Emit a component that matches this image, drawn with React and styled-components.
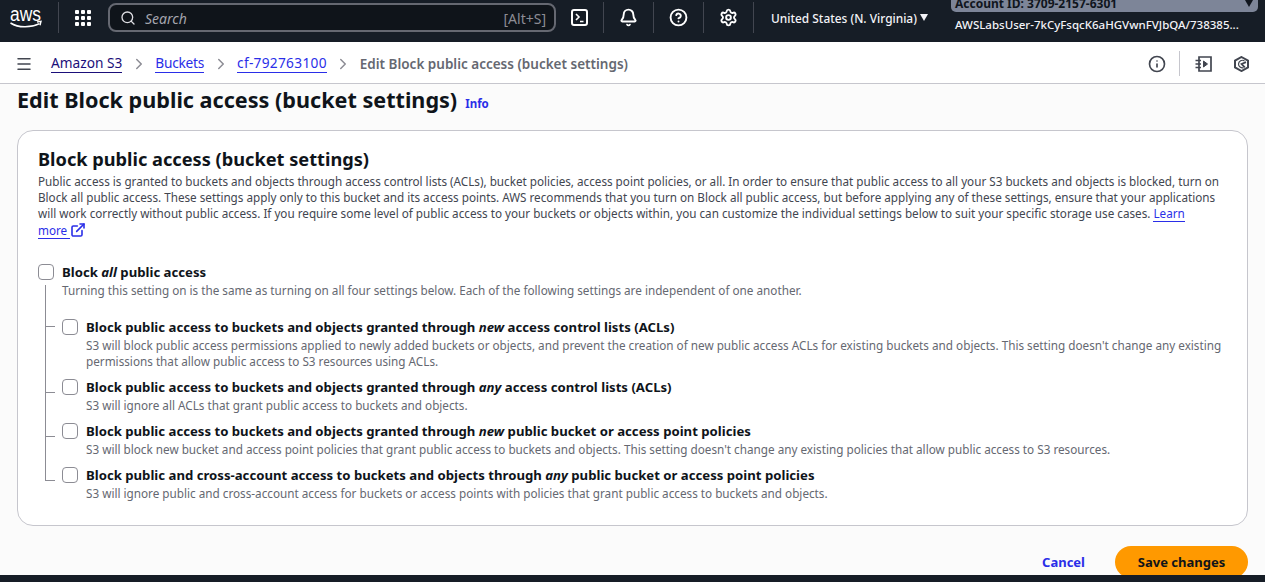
import styled, { createGlobalStyle } from "styled-components";
import { Search, Bell, CircleHelp, Settings, Info, Menu, ChevronRight, ExternalLink } from "lucide-react";

const GlobalStyle = createGlobalStyle`
  html, body { margin: 0; padding: 0; }
  body {
    font-family: "Noto Sans", "Open Sans", sans-serif;
    font-size: 14px;
    color: #0f141a;
    background: #fbfbfb;
  }
  * { box-sizing: border-box; }
`;

const Page = styled.div`
  width: 1265px;
  height: 582px;
  display: flex;
  flex-direction: column;
  overflow: hidden;
`;

const TopNav = styled.header`
  flex: 0 0 42px;
  background: #161d26;
  display: flex;
  align-items: flex-start;
  padding-top: 2px;
  color: #fff;
`;

const Logo = styled.div`
  width: 59px;
  height: 31px;
  padding-left: 10px;
  display: flex;
  align-items: center;
  border-right: 1px solid #424650;
`;

const GridButton = styled.div`
  width: 49px;
  height: 31px;
  padding: 8px 0 0 16px;
  display: grid;
  grid-template-columns: repeat(3, 4px);
  grid-auto-rows: 4px;
  gap: 2px;
  i { background: #fff; border-radius: 1px; }
`;

const SearchBox = styled.div`
  width: 448px;
  height: 29px;
  margin-top: 1px;
  border: 2px solid #656871;
  border-radius: 8px;
  background: #0f141a;
  display: flex;
  align-items: center;
  padding: 0 8px 0 10px;
  gap: 9px;
  color: #dedee3;
  em { flex: 1; color: #a4a4ad; font-size: 14px; margin-top: 1px; }
  span { color: #8c8c94; font-size: 14px; margin-top: 1px; }
`;

const NavIcon = styled.div`
  width: ${(p) => p.$w}px;
  height: 31px;
  display: flex;
  align-items: center;
  justify-content: center;
  border-right: 1px solid #424650;
  color: #fff;
`;

const Region = styled.div`
  width: 197px;
  height: 31px;
  padding-left: 17px;
  font-size: 11.9px;
  font-weight: 500;
  display: flex;
  align-items: center;
  color: #f3f3f7;
  white-space: pre;
`;

const Caret = styled.i`
  width: 0;
  height: 0;
  border-left: 4.5px solid transparent;
  border-right: 4.5px solid transparent;
  border-top: 7px solid ${(p) => p.$color || "#f3f3f7"};
`;

const Account = styled.div`
  width: 307px;
  margin-top: -2px;
  font-size: 12px;
  font-weight: 500;
  display: flex;
  flex-direction: column;
  white-space: nowrap;
`;

const AccountId = styled.div`
  height: 12px;
  background: #7d8598;
  color: #10151d;
  border-radius: 0 0 5px 5px;
  font-weight: 700;
  line-height: 8px;
  padding: 0 5px 0 4px;
  display: flex;
  justify-content: space-between;
  align-items: flex-start;
  overflow: hidden;
`;

const UserName = styled.div`
  margin-top: 5px;
  padding-left: 4px;
  font-size: 11.5px;
  color: #f3f3f7;
`;

const Breadcrumbs = styled.nav`
  flex: 0 0 42px;
  background: #fff;
  border-bottom: 1px solid #c6c6cd;
  display: flex;
  align-items: center;
  padding: 2px 9px 0 15px;
`;

const MenuButton = styled.div`
  width: 36px;
  display: flex;
  color: #424650;
`;

const Crumb = styled.a`
  font-size: 13.7px;
  line-height: 18px;
  letter-spacing: ${(p) => p.$track || 0}px;
  color: ${(p) => (p.$dark ? "#1b0f7a" : "#2a2ee8")};
  border-bottom: 1px solid currentColor;
  white-space: nowrap;
`;

const Separator = styled.span`
  width: 33px;
  display: flex;
  justify-content: center;
  color: #8c8c94;
`;

const Current = styled.span`
  font-size: 13.5px;
  font-weight: 600;
  color: #656871;
  white-space: nowrap;
`;

const ToolIcons = styled.div`
  margin-left: auto;
  display: flex;
  align-items: center;
  color: #424650;
`;

const ToolIcon = styled.div`
  width: ${(p) => p.$w}px;
  height: 25px;
  display: flex;
  align-items: center;
  justify-content: center;
  border-right: ${(p) => (p.$divider ? "1px solid #c6c6cd" : "none")};
`;

const Main = styled.main`
  flex: 1;
  min-height: 0;
  overflow: hidden;
  padding: 0 17px;
`;

const TitleRow = styled.div`
  height: 46px;
  display: flex;
  align-items: baseline;
  gap: 8px;
  h1 {
    margin: 0;
    font-size: 21.6px;
    line-height: 32px;
    font-weight: 700;
  }
`;

const InfoLink = styled.a`
  font-size: 11.5px;
  font-weight: 700;
  color: #2a2ee8;
`;

const Card = styled.section`
  width: 1231px;
  height: 396px;
  background: #fff;
  border: 1px solid #c6c6cd;
  border-radius: 16px;
  padding: 16px 20px;
  h2 {
    margin: 0;
    font-size: 18.2px;
    line-height: 24px;
    font-weight: 700;
  }
`;

const Description = styled.p`
  margin: 3px 0 0;
  font-size: 11.69px;
  line-height: 16px;
  color: #424650;
  a {
    color: #2a2ee8;
    border-bottom: 1px solid #2a2ee8;
  }
`;

const LinkEnd = styled.span`
  white-space: nowrap;
  svg { vertical-align: -3px; color: #2a2ee8; }
`;

const Box = styled.i`
  flex: 0 0 16px;
  width: 16px;
  height: 16px;
  margin-top: 1px;
  background: #fff;
  border: 1px solid #8c8c94;
  border-radius: 4px;
`;

const MasterRow = styled.div`
  margin-top: 24px;
  display: flex;
  gap: 8px;
`;

const Label = styled.div`
  font-size: 13.17px;
  line-height: 18px;
  font-weight: 700;
  color: #0f141a;
  white-space: nowrap;
  em { font-weight: 700; }
`;

const Hint = styled.div`
  margin-top: 1px;
  font-size: 11.72px;
  line-height: 16px;
  font-weight: 400;
  color: #656871;
`;

const Tree = styled.div`
  position: relative;
  margin: 0 0 0 7px;
  padding: 20px 0 0 17px;
  display: flex;
  flex-direction: column;
  /* the bracket line stops at the last row's tick */
  &::before {
    content: "";
    position: absolute;
    left: 0;
    top: -13px;
    bottom: 20px;
    width: 1px;
    background: #8c8c94;
  }
`;

const Row = styled.div`
  position: relative;
  display: flex;
  gap: 8px;
  margin-bottom: ${(p) => p.$gap}px;
  &::before {
    content: "";
    position: absolute;
    left: -17px;
    top: ${(p) => p.$tick}px;
    width: 10px;
    height: 1px;
    background: #8c8c94;
  }
`;

const Actions = styled.div`
  margin-top: 20px;
  display: flex;
  justify-content: flex-end;
  align-items: center;
  gap: 30px;
`;

const CancelLink = styled.a`
  font-size: 13px;
  font-weight: 700;
  color: #2a2ee8;
`;

const SaveButton = styled.button`
  width: 133px;
  height: 32px;
  border: 0;
  border-radius: 16px;
  background: #ff9900;
  color: #0f141a;
  font-family: inherit;
  font-size: 13px;
  font-weight: 700;
`;

const Footer = styled.footer`
  flex: 0 0 7px;
  background: #161d26;
`;

const AwsLogo = () => (
  <svg width="33" height="22" viewBox="0 0 33 22" fill="none">
    <text x="0" y="13.5" fill="#fff" fontFamily="Liberation Sans, sans-serif" fontSize="20" textLength="31" lengthAdjust="spacingAndGlyphs">aws</text>
    <path d="M0.5 16c8 5 20 5 29 .6" stroke="#fff" strokeWidth="1.5" fill="none" />
    <path d="M27 15l4-.6-1 3.8" stroke="#fff" strokeWidth="1.4" fill="none" />
  </svg>
);

const CloudShell = () => (
  <svg width="17" height="17" viewBox="0 0 17 17" fill="none" stroke="#fff" strokeWidth="2">
    <rect x="1" y="1" width="15" height="15" rx="2" />
    <path d="M5 5l3 3-3 3M9 12.5h3.5" strokeWidth="1.6" />
  </svg>
);

const Notebook = () => (
  <svg width="17" height="16" viewBox="0 0 17 16" fill="none" stroke="currentColor" strokeWidth="1.7">
    <path d="M4 1h12v14H4zM0.5 4.5h5.5M0.5 8h5.5M0.5 11.5h5.5" />
    <path d="M8.5 5l4 3-4 3z" fill="currentColor" strokeWidth="1" />
  </svg>
);

const HexIcon = () => (
  <svg width="15" height="16" viewBox="0 0 15 16" fill="none" stroke="currentColor" strokeWidth="2">
    <path d="M7.5 1L14 4.6v6.8L7.5 15 1 11.4V4.6z" />
    <path d="M12 6.2L7.6 8l3.2 3.4" strokeWidth="1.8" />
    <path d="M10.5 4.9a3.9 3.9 0 0 0-6 3.1 3.9 3.9 0 0 0 5 3.7" strokeWidth="1.2" />
  </svg>
);

const settings = [
  {
    before: "Block public access to buckets and objects granted through ",
    word: "new",
    after: " access control lists (ACLs)",
    hint: "S3 will block public access permissions applied to newly added buckets or objects, and prevent the creation of new public access ACLs for existing buckets and objects. This setting doesn't change any existing permissions that allow public access to S3 resources using ACLs.",
    gap: 9,
    tick: 8,
  },
  {
    before: "Block public access to buckets and objects granted through ",
    word: "any",
    after: " access control lists (ACLs)",
    hint: "S3 will ignore all ACLs that grant public access to buckets and objects.",
    gap: 9,
    tick: 14,
  },
  {
    before: "Block public access to buckets and objects granted through ",
    word: "new",
    after: " public bucket or access point policies",
    hint: "S3 will block new bucket and access point policies that grant public access to buckets and objects. This setting doesn't change any existing policies that allow public access to S3 resources.",
    gap: 9,
    tick: 14,
  },
  {
    before: "Block public and cross-account access to buckets and objects through ",
    word: "any",
    after: " public bucket or access point policies",
    hint: "S3 will ignore public and cross-account access for buckets or access points with policies that grant public access to buckets and objects.",
    gap: 0,
    tick: 14,
  },
];

export default function App() {
  return (
    <Page>
      <GlobalStyle />
      <TopNav>
        <Logo><AwsLogo /></Logo>
        <GridButton>
          {Array.from({ length: 9 }).map((_, i) => <i key={i} />)}
        </GridButton>
        <SearchBox>
          <Search size={16} strokeWidth={2} />
          <em>Search</em>
          <span>[Alt+S]</span>
        </SearchBox>
        <NavIcon $w={48}><CloudShell /></NavIcon>
        <NavIcon $w={50}><Bell size={19} strokeWidth={2.4} /></NavIcon>
        <NavIcon $w={50}><CircleHelp size={19} strokeWidth={2.4} /></NavIcon>
        <NavIcon $w={50}><Settings size={19} strokeWidth={2.4} /></NavIcon>
        <Region>United States (N. Virginia) <Caret /></Region>
        <Account>
          <AccountId>
            <span>Account ID: 3709-2157-6301</span>
            <Caret $color="#10151d" />
          </AccountId>
          <UserName>AWSLabsUser-7kCyFsqcK6aHGVwnFVJbQA/738385...</UserName>
        </Account>
      </TopNav>

      <Breadcrumbs>
        <MenuButton><Menu size={18} strokeWidth={2} /></MenuButton>
        <Crumb $dark>Amazon S3</Crumb>
        <Separator><ChevronRight size={18} /></Separator>
        <Crumb $track={-0.25}>Buckets</Crumb>
        <Separator><ChevronRight size={18} /></Separator>
        <Crumb $track={0.3}>cf-792763100</Crumb>
        <Separator><ChevronRight size={18} /></Separator>
        <Current>Edit Block public access (bucket settings)</Current>
        <ToolIcons>
          <ToolIcon $w={46} $divider><Info size={18} strokeWidth={2.2} /></ToolIcon>
          <ToolIcon $w={46}><Notebook /></ToolIcon>
          <ToolIcon $w={30}><HexIcon /></ToolIcon>
        </ToolIcons>
      </Breadcrumbs>

      <Main>
        <TitleRow>
          <h1>Edit Block public access (bucket settings)</h1>
          <InfoLink>Info</InfoLink>
        </TitleRow>
        <Card>
          <h2>Block public access (bucket settings)</h2>
          <Description>
            Public access is granted to buckets and objects through access control lists (ACLs), bucket policies, access point policies, or all. In order to ensure that public access to all your S3 buckets and objects is blocked, turn on Block all public access. These settings apply only to this bucket and its access points. AWS recommends that you turn on Block all public access, but before applying any of these settings, ensure that your applications will work correctly without public access. If you require some level of public access to your buckets or objects within, you can customize the individual settings below to suit your specific storage use cases. <a>Learn</a>{" "}
            <LinkEnd><a>more&nbsp;</a><ExternalLink size={16} strokeWidth={2.4} /></LinkEnd>
          </Description>
          <MasterRow>
            <Box />
            <div>
              <Label>Block <em>all</em> public access</Label>
              <Hint>Turning this setting on is the same as turning on all four settings below. Each of the following settings are independent of one another.</Hint>
            </div>
          </MasterRow>
          <Tree>
            {settings.map((s, i) => (
              <Row key={i} $gap={s.gap} $tick={s.tick}>
                <Box />
                <div>
                  <Label>{s.before}<em>{s.word}</em>{s.after}</Label>
                  <Hint>{s.hint}</Hint>
                </div>
              </Row>
            ))}
          </Tree>
        </Card>
        <Actions>
          <CancelLink>Cancel</CancelLink>
          <SaveButton>Save changes</SaveButton>
        </Actions>
      </Main>
      <Footer />
    </Page>
  );
}
